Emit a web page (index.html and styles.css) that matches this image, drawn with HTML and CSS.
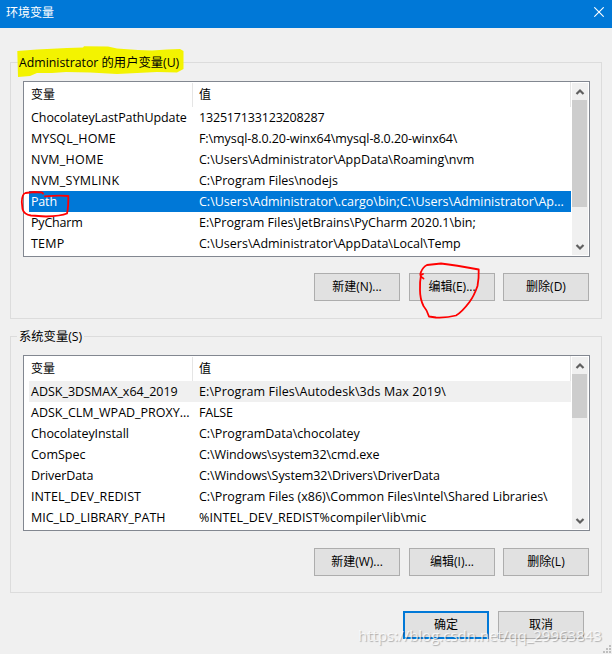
FILE: index.html
```html
<!DOCTYPE html>
<html lang="zh-CN">
<head>
<meta charset="utf-8">
<title>环境变量</title>
<link rel="stylesheet" href="styles.css">
</head>
<body>
<div class="dialog">
  <header class="titlebar"><span>环境变量</span>
    <svg class="close" width="10" height="10" viewBox="0 0 10 10"><path d="M.3.3 9.7 9.7M9.7.3.3 9.7"/></svg>
  </header>
  <main class="content">
    <section class="group">
      <h2 class="legend marked">
        <svg class="highlight" width="168" height="34" viewBox="0 0 168 34"><path d="M.3 5 20 3.500 50 2 66 1.500 67 .3 91 .5 100 2.500 121 4 135 4.500 150 3.500 163 3 166.500 5 166.500 23 160 26.500 140 26 100 28 73 26.500 49 26 35 27 20 27 13 30 1 31Z"/></svg>
        <span>Administrator 的用户变量(U)</span></h2>
      <div class="list">
        <div class="table">
          <div class="head"><span>变量</span><span>值</span></div>
          <div class="row"><span class="tight">ChocolateyLastPathUpdate</span><span class="tighter">132517133123208287</span></div>
          <div class="row"><span class="wide">MYSQL_HOME</span><span class="tight">F:\mysql-8.0.20-winx64\mysql-8.0.20-winx64\</span></div>
          <div class="row"><span class="wider">NVM_HOME</span><span>C:\Users\Administrator\AppData\Roaming\nvm</span></div>
          <div class="row"><span class="wider">NVM_SYMLINK</span><span>C:\Program Files\nodejs</span></div>
          <div class="row selected"><span class="tighter">Path</span><span>C:\Users\Administrator\.cargo\bin;C:\Users\Administrator\Ap...</span></div>
          <div class="row"><span class="tighter">PyCharm</span><span>E:\Program Files\JetBrains\PyCharm 2020.1\bin;</span></div>
          <div class="row"><span class="wider">TEMP</span><span>C:\Users\Administrator\AppData\Local\Temp</span></div>
        </div>
        <div class="scrollbar">
          <svg class="arrow" width="16" height="17" viewBox="0 0 16 17"><path d="M4.500 11 8 7.500l3.500 3.500"/></svg>
          <div class="thumb long"></div>
          <svg class="arrow down" width="16" height="17" viewBox="0 0 16 17"><path d="M4.500 7 8 10.500l3.500-3.500"/></svg>
        </div>
      </div>
      <div class="actions">
        <button>新建(N)...</button><button>编辑(E)...</button><button>删除(D)</button>
      </div>
    </section>
    <section class="group system">
      <h2 class="legend"><span>系统变量(S)</span></h2>
      <div class="list">
        <div class="table">
          <div class="head"><span>变量</span><span>值</span></div>
          <div class="row inactive"><span>ADSK_3DSMAX_x64_2019</span><span class="wide">E:\Program Files\Autodesk\3ds Max 2019\</span></div>
          <div class="row"><span>ADSK_CLM_WPAD_PROXY...</span><span class="tighter">FALSE</span></div>
          <div class="row"><span class="tight">ChocolateyInstall</span><span>C:\ProgramData\chocolatey</span></div>
          <div class="row"><span>ComSpec</span><span class="tight">C:\Windows\system32\cmd.exe</span></div>
          <div class="row"><span class="tight">DriverData</span><span class="tight">C:\Windows\System32\Drivers\DriverData</span></div>
          <div class="row"><span class="wide">INTEL_DEV_REDIST</span><span>C:\Program Files (x86)\Common Files\Intel\Shared Libraries\</span></div>
          <div class="row"><span>MIC_LD_LIBRARY_PATH</span><span class="wide">%INTEL_DEV_REDIST%compiler\lib\mic</span></div>
        </div>
        <div class="scrollbar">
          <svg class="arrow" width="16" height="17" viewBox="0 0 16 17"><path d="M4.500 11 8 7.500l3.500 3.500"/></svg>
          <div class="thumb short"></div>
          <svg class="arrow down" width="16" height="17" viewBox="0 0 16 17"><path d="M4.500 7 8 10.500l3.500-3.500"/></svg>
        </div>
      </div>
      <div class="actions">
        <button>新建(W)...</button><button>编辑(I)...</button><button>删除(L)</button>
      </div>
    </section>
    <footer class="footer"><button class="primary">确定</button><button>取消</button></footer>
  </main>
  <svg class="ink" width="612" height="654" viewBox="0 0 612 654">
    <path d="M43 193.500 42 192.500 34 192 25.500 193Q22 194 21.800 202L22.500 209Q24 214.500 31 215.500L46 216.500Q61 216 67 213.500Q68.500 207 68.300 196Q60 195 45 196.300"/>
    <path d="M423.500 278.500Q419 276 421 272Q423 267 427 265L441 263.500Q455 265 478.700 269.500Q479 278 477.500 286Q474 296 469.500 302Q462 312 456 315.500Q447 318 436 317.500L429 316.500Q427 310 423.500 306Q420 299 420 290Q419.800 281 421 275L423 274"/>
  </svg>
  <div class="watermark">https://blog.csdn.net/qq_29963843</div>
  <svg class="grip" width="8" height="8" viewBox="0 0 8 8"><path d="M6 0h2v2H6zM3 3h2v2H3zM6 3h2v2H6zM0 6h2v2H0zM3 6h2v2H3zM6 6h2v2H6z"/></svg>
</div>
</body>
</html>
```
FILE: styles.css
```css
* { box-sizing: border-box; }
body { margin: 0; }
.dialog {
  position: relative;
  width: 612px;
  height: 654px;
  overflow: hidden;
  background: #f0f0f0;
  color: #000;
  font: 12.5px/21px "Open Sans", "Noto Sans CJK SC", sans-serif;
}
.titlebar {
  display: flex;
  justify-content: space-between;
  height: 28px;
  padding: 2px 8px 0 6px;
  background: #0078d7;
  color: #fff;
  font-size: 12px;
}
.close { margin-top: 5px; fill: none; stroke: #fff; stroke-width: 1.1; }
.content { padding: 34px 10px 0; }
.group {
  height: 257px;
  margin-bottom: 17px;
  padding: 0 12px;
  border: 1px solid #dcdcdc;
}
.legend {
  position: relative;
  width: max-content;
  height: 18px;
  margin: -10px 0 0 -6px;
  padding: 0 2px;
  background: #f0f0f0;
  font-size: 12.3px;
  font-weight: 400;
  line-height: 19px;
}
.legend span { position: relative; }
.marked { background: none; }
.highlight { position: absolute; left: 0; top: -7px; fill: #f3f300; }
.list {
  display: flex;
  justify-content: space-between;
  height: 176px;
  margin: 10px -1px 0 0;
  padding-right: 1px;
  border: 1px solid #828790;
  background: #fff;
}
.table { width: 547px; padding-left: 5px; }
.head, .row { display: grid; grid-template-columns: 164px 1fr; }
.head {
  height: 25px;
  padding-top: 1px;
  border-right: 1px solid #e5e5e5;
  line-height: 24px;
  font-size: 12px;
}
.head span:first-child { border-right: 1px solid #e5e5e5; height: 24px; }
.head span, .row span { padding-left: 2px; }
.head span + span, .row span + span { padding-left: 6px; }
.row { height: 21px; white-space: nowrap; }
.tight { letter-spacing: -.08px; }
.tighter { letter-spacing: -.18px; }
.wide { letter-spacing: .09px; }
.wider { letter-spacing: .24px; }
.selected { background: #0078d7; color: #fff; }
.inactive { background: #f0f0f0; }
.scrollbar {
  display: flex;
  flex-direction: column;
  width: 16px;
  height: 172px;
  margin-top: 1px;
  background: #f0f0f0;
}
.arrow { display: block; flex: none; fill: none; stroke: #606060; stroke-width: 2.2; }
.down { margin-top: auto; }
.thumb { width: 15px; background: #cdcdcd; }
.long { height: 107px; }
.short { height: 44px; }
.actions { display: flex; justify-content: flex-end; gap: 9px; margin-top: 16px; }
.actions button:nth-child(2) { margin-right: -1px; }
.system .actions { margin-top: 17px; }
button {
  width: 86px;
  height: 28px;
  padding: 0;
  border: 1px solid #adadad;
  background: #e1e1e1;
  color: #000;
  font: 12px/24px "Open Sans", "Noto Sans CJK SC", sans-serif;
}
.footer { display: flex; justify-content: flex-end; gap: 9px; padding: 1px 18px 0 0; }
.primary { border: 2px solid #0078d7; }
.ink { position: absolute; left: 0; top: 0; fill: none; stroke: #f00; stroke-width: 1.8; stroke-linecap: round; stroke-linejoin: round; }
.watermark {
  position: absolute;
  left: 358px;
  top: 625px;
  color: rgba(255, 255, 255, .75);
  font: 15px/20px "Open Sans", sans-serif;
  text-shadow: 1px 1px 1px rgba(0, 0, 0, .28);
  white-space: nowrap;
}
.grip { position: absolute; left: 603px; top: 645px; fill: #bfbfbf; }
```
